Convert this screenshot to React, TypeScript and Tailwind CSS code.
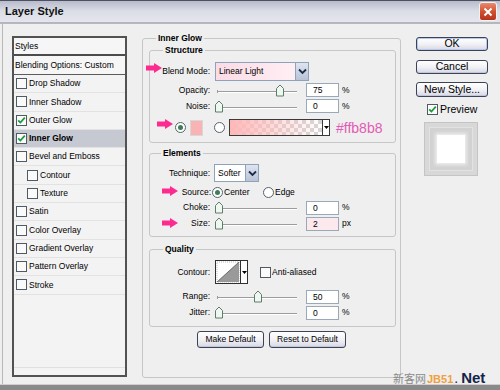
import React from "react";

const Check = ({ checked }: { checked?: boolean }) => (
  <span className="w-[11px] h-[11px] border border-[#4e5a64] bg-[#fafafa] flex items-center justify-center shrink-0">
    {checked && (
      <svg width="9" height="9" viewBox="0 0 9 9">
        <path d="M1.2 4.3 L3.4 6.6 L7.8 1.6" stroke="#1c9a3c" strokeWidth="1.7" fill="none" />
      </svg>
    )}
  </span>
);

const Radio = ({ on }: { on?: boolean }) => (
  <span className="w-[11px] h-[11px] rounded-full border border-[#56626c] bg-white flex items-center justify-center shrink-0">
    {on && <span className="w-[5px] h-[5px] rounded-full bg-[#3d7f54]" />}
  </span>
);

const Slider = ({ pos }: { pos: number }) => (
  <svg width="84" height="13" viewBox="0 0 84 13" className="shrink-0">
    <line x1="2" y1="7.5" x2="82" y2="7.5" stroke="#9c9c9c" />
    <line x1="2" y1="8.5" x2="82" y2="8.5" stroke="#ffffff" />
    <line x1="2.5" y1="6" x2="2.5" y2="9" stroke="#9c9c9c" />
    <path
      d={`M${pos - 3.5} 4.5 L${pos} 1 L${pos + 3.5} 4.5 V12 H${pos - 3.5} Z`}
      fill="#f0f6f0"
      stroke="#5b7d6b"
    />
  </svg>
);

const Input = ({ value, pink }: { value: string; pink?: boolean }) => (
  <div
    className={
      pink
        ? "w-[33px] h-[14px] border border-[#9aa9b8] bg-[#fbe9ee] pl-[6px] leading-[12px] shrink-0"
        : "w-[33px] h-[14px] border border-[#9aa9b8] bg-white pl-[6px] leading-[12px] shrink-0"
    }
  >
    {value}
  </div>
);

const Chevron = () => (
  <svg width="9" height="7" viewBox="0 0 9 7">
    <path d="M1 1.5 L4.5 5 L8 1.5" stroke="#1d2c4c" strokeWidth="1.8" fill="none" />
  </svg>
);

const Arrow = ({ className }: { className: string }) => (
  <svg width="16" height="10" viewBox="0 0 16 10" className={className}>
    <path d="M0 2.5 H8 V0 L16 5 L8 10 V7.5 H0 Z" fill="#ff2a90" />
  </svg>
);

const Legend = ({ text, ml }: { text: string; ml: string }) => (
  <div className={`-mt-[7px] ${ml} px-[2px] w-fit h-[12px] leading-[12px] font-bold bg-[#efefef]`}>{text}</div>
);

const XPButton = ({ children, className }: { children: React.ReactNode; className: string }) => (
  <div
    className={`flex items-center justify-center border border-[#3b4457] rounded-[3px] bg-gradient-to-b from-[#ffffff] via-[#f2f2f6] to-[#d6d8e4] shadow-[inset_0_-1px_0_#c2c6d6] ${className}`}
  >
    {children}
  </div>
);

const items: { label: string; checked?: boolean; indent?: boolean; selected?: boolean }[] = [
  { label: "Drop Shadow" },
  { label: "Inner Shadow" },
  { label: "Outer Glow", checked: true },
  { label: "Inner Glow", checked: true, selected: true },
  { label: "Bevel and Emboss" },
  { label: "Contour", indent: true },
  { label: "Texture", indent: true },
  { label: "Satin" },
  { label: "Color Overlay" },
  { label: "Gradient Overlay" },
  { label: "Pattern Overlay" },
  { label: "Stroke" },
];

export default function App() {
  return (
    <div className="w-[500px] h-[390px] relative overflow-hidden bg-[#efefef] text-black text-[8.5px] font-['Liberation_Sans',Arial,sans-serif] flex flex-col">
      {/* Title bar */}
      <div className="h-[24px] shrink-0 flex items-center justify-between border-t border-[#4c5060] border-b-2 border-b-[#b4b6c0] bg-gradient-to-b from-[#b8bccb] via-[#dcdee7] to-[#e4e5ec]">
        <div className="ml-[5px] text-[11px] font-bold text-[#111] leading-none">Layer Style</div>
        <div className="mr-[3px] w-[18px] h-[19px] rounded-[3px] border border-[#f4f4f4] bg-gradient-to-b from-[#e88a70] via-[#d2502e] to-[#b8321a] flex items-center justify-center">
          <svg width="10" height="10" viewBox="0 0 10 10">
            <path d="M1.5 1.5 L8.5 8.5 M8.5 1.5 L1.5 8.5" stroke="#ffffff" strokeWidth="2" />
          </svg>
        </div>
      </div>

      {/* Body */}
      <div className="h-[360px] shrink-0 flex border-l border-l-[#b8b8b8] ml-[2px] pl-[9px] pt-[12px]">
        {/* Left list */}
        <div className="w-[115px] h-[341px] shrink-0 border-2 border-[#525252] bg-[#f3f3f3] flex flex-col">
          <div className="h-[16px] shrink-0 pl-[1px] flex items-center bg-[#f6f6f6]">Styles</div>
          <div className="h-[2px] shrink-0 bg-[#4c4c4c]" />
          <div className="h-[19px] shrink-0 pl-[1px] flex items-center bg-[#f6f6f6] border-b border-[#5c5c5c]">
            Blending Options: Custom
          </div>
          {items.map((it) => (
            <div
              key={it.label}
              className={
                (it.selected ? "bg-[#c6c8d2] font-bold " : "") +
                (it.indent ? "pl-[13px] " : "pl-[2px] ") +
                "h-[18.3px] shrink-0 flex items-center gap-[2px] border-b border-[#e2e2e2]"
              }
            >
              <Check checked={it.checked} />
              <span>{it.label}</span>
            </div>
          ))}
          <div className="flex-1" />
          <div className="h-[1px] bg-[#e0e0e0] mb-[7px]" />
        </div>

        {/* Middle: Inner Glow group */}
        <div className="ml-[15px] mt-[2px] w-[259px] h-[340px] shrink-0 border border-[#c6c6c6] rounded-[3px] flex flex-col">
          <Legend text="Inner Glow" ml="ml-[13px]" />

          {/* Structure */}
          <div className="mt-[6px] ml-[6px] mr-[4px] h-[93px] shrink-0 border border-[#c6c6c6] rounded-[3px] flex flex-col">
            <Legend text="Structure" ml="ml-[13px]" />
            <div className="mt-[6px] h-[19px] flex items-center">
              <div className="w-[60px] text-right">Blend Mode:</div>
              <div className="ml-[5px] w-[94px] h-[19px] flex border border-[#8ea3ba] bg-gradient-to-r from-[#fbdbe6] to-[#fff2f6]">
                <div className="flex-1 pl-[3px] flex items-center">Linear Light</div>
                <div className="w-[13px] h-full border-l border-[#8ea3ba] bg-gradient-to-b from-[#dfe5f0] to-[#b9c3d6] flex items-center justify-center">
                  <Chevron />
                </div>
              </div>
            </div>
            <div className="mt-[2px] h-[14px] flex items-center">
              <div className="w-[60px] text-right">Opacity:</div>
              <div className="ml-[5px]">
                <Slider pos={65} />
              </div>
              <div className="ml-[7px]">
                <Input value="75" />
              </div>
              <span className="ml-[3px]">%</span>
            </div>
            <div className="mt-[2px] h-[14px] flex items-center">
              <div className="w-[60px] text-right">Noise:</div>
              <div className="ml-[5px]">
                <Slider pos={4} />
              </div>
              <div className="ml-[7px]">
                <Input value="0" />
              </div>
              <span className="ml-[3px]">%</span>
            </div>
            <div className="mt-[6px] h-[17px] flex items-center">
              <div className="ml-[25px]">
                <Radio on />
              </div>
              <div className="ml-[4px] w-[13px] h-[16px] bg-[#f8b4b4] border border-[#d8d8d8]" />
              <div className="ml-[11px]">
                <Radio />
              </div>
              <div className="ml-[4px] h-[17px] flex border border-[#3a3a3a]">
                <svg width="92" height="15" viewBox="0 0 92 15">
                  <defs>
                    <pattern id="chk" width="8" height="8" patternUnits="userSpaceOnUse">
                      <rect width="8" height="8" fill="#ffffff" />
                      <rect width="4" height="4" fill="#d6d6d6" />
                      <rect x="4" y="4" width="4" height="4" fill="#d6d6d6" />
                    </pattern>
                    <linearGradient id="gr" x1="0" x2="1" y1="0" y2="0">
                      <stop offset="0" stopColor="#ffb8b8" stopOpacity="1" />
                      <stop offset="1" stopColor="#ffb8b8" stopOpacity="0" />
                    </linearGradient>
                  </defs>
                  <rect width="92" height="15" fill="url(#chk)" />
                  <rect width="92" height="15" fill="url(#gr)" />
                </svg>
                <div className="w-[7px] h-full border-l border-[#3a3a3a] bg-white flex items-center justify-center">
                  <svg width="5" height="3" viewBox="0 0 5 3">
                    <path d="M0 0 H5 L2.5 3 Z" fill="#000" />
                  </svg>
                </div>
              </div>
              <div className="ml-[6px] text-[14px] leading-none text-[#e35bb5]">#ffb8b8</div>
            </div>
          </div>

          {/* Elements */}
          <div className="mt-[10px] ml-[6px] mr-[4px] h-[84px] shrink-0 border border-[#c6c6c6] rounded-[3px] flex flex-col">
            <Legend text="Elements" ml="ml-[11px]" />
            <div className="mt-[5px] h-[18px] flex items-center">
              <div className="w-[60px] text-right">Technique:</div>
              <div className="ml-[4px] w-[45px] h-[18px] flex border border-[#8ea3ba] bg-white">
                <div className="flex-1 pl-[3px] flex items-center">Softer</div>
                <div className="w-[13px] h-full border-l border-[#8ea3ba] bg-gradient-to-b from-[#dfe5f0] to-[#b9c3d6] flex items-center justify-center">
                  <Chevron />
                </div>
              </div>
            </div>
            <div className="mt-[3px] h-[14px] flex items-center">
              <div className="w-[61px] text-right">Source:</div>
              <div className="ml-[1px]">
                <Radio on />
              </div>
              <span className="ml-[1px] w-[39px]">Center</span>
              <Radio />
              <span className="ml-[1px]">Edge</span>
            </div>
            <div className="mt-[2px] h-[13px] flex items-center">
              <div className="w-[60px] text-right">Choke:</div>
              <div className="ml-[5px]">
                <Slider pos={4} />
              </div>
              <div className="ml-[7px]">
                <Input value="0" />
              </div>
              <span className="ml-[3px]">%</span>
            </div>
            <div className="mt-[3px] h-[13px] flex items-center">
              <div className="w-[60px] text-right">Size:</div>
              <div className="ml-[5px]">
                <Slider pos={4} />
              </div>
              <div className="ml-[7px]">
                <Input value="2" pink />
              </div>
              <span className="ml-[3px]">px</span>
            </div>
          </div>

          {/* Quality */}
          <div className="mt-[12px] ml-[6px] mr-[4px] h-[78px] shrink-0 border border-[#c6c6c6] rounded-[3px] flex flex-col">
            <Legend text="Quality" ml="ml-[13px]" />
            <div className="mt-[5px] h-[24px] flex items-center">
              <div className="w-[60px] text-right">Contour:</div>
              <div className="ml-[5px] w-[33px] h-[24px] flex border border-[#303030] bg-white">
                <svg width="24" height="22" viewBox="0 0 24 22">
                  <rect x="1" y="1" width="22" height="20" fill="none" stroke="#bbbbbb" strokeDasharray="1 1" />
                  <path d="M1 21 L23 1 V21 Z" fill="#9a9a9a" />
                  <path d="M1 21 L23 1" stroke="#555" strokeWidth="0.8" />
                </svg>
                <div className="w-[7px] h-full border-l border-[#303030] flex items-center justify-center">
                  <svg width="5" height="3" viewBox="0 0 5 3">
                    <path d="M0 0 H5 L2.5 3 Z" fill="#000" />
                  </svg>
                </div>
              </div>
              <div className="ml-[12px]">
                <Check />
              </div>
              <span className="ml-[1px]">Anti-aliased</span>
            </div>
            <div className="mt-[6px] h-[13px] flex items-center">
              <div className="w-[60px] text-right">Range:</div>
              <div className="ml-[5px]">
                <Slider pos={43} />
              </div>
              <div className="ml-[7px]">
                <Input value="50" />
              </div>
              <span className="ml-[3px]">%</span>
            </div>
            <div className="mt-[3px] h-[13px] flex items-center">
              <div className="w-[60px] text-right">Jitter:</div>
              <div className="ml-[5px]">
                <Slider pos={4} />
              </div>
              <div className="ml-[7px]">
                <Input value="0" />
              </div>
              <span className="ml-[3px]">%</span>
            </div>
          </div>

          <div className="mt-[4px] pl-[54px] flex gap-[5px]">
            <XPButton className="w-[67px] h-[17px]">Make Default</XPButton>
            <XPButton className="w-[77px] h-[17px]">Reset to Default</XPButton>
          </div>
        </div>

        {/* Right column */}
        <div className="ml-[15px] w-[72px] shrink-0 flex flex-col text-[10.5px]">
          <XPButton className="mt-[1px] h-[14px] border-[#2e3a66] shadow-[inset_0_0_0_1px_#b8c8ec]">OK</XPButton>
          <XPButton className="mt-[9px] h-[14px]">Cancel</XPButton>
          <XPButton className="mt-[8px] h-[15px]">New Style...</XPButton>
          <div className="mt-[7px] ml-[11px] h-[11px] flex items-center gap-[2px]">
            <Check checked />
            <span>Preview</span>
          </div>
          <div className="mt-[7px] ml-[8px] w-[54px] h-[54px] border border-[#c4c4c4] bg-[#d8d8d8] p-[4px]">
            <div className="w-full h-full border border-[#e2e2e2] bg-[#d2d2d2] flex items-center justify-center">
              <div className="w-[28px] h-[28px] bg-white shadow-[0_0_3px_2px_#ececec]" />
            </div>
          </div>
        </div>
      </div>

      {/* Bottom frame */}
      <div className="h-[6px] shrink-0 border-t border-[#cfcfcf] bg-[#8a8a8a]" />

      {/* Annotation arrows */}
      <Arrow className="absolute left-[146px] top-[63px]" />
      <Arrow className="absolute left-[157px] top-[119px]" />
      <Arrow className="absolute left-[162px] top-[186px]" />
      <Arrow className="absolute left-[162px] top-[218px]" />

      {/* Watermark */}
      <div className="absolute left-[393px] top-[370px] w-max whitespace-nowrap flex items-end leading-none">
        <span className="text-[11px] leading-[13px] text-[#8a8a8a] font-['Noto_Sans_CJK_SC',sans-serif]">新客网</span>
        <span className="ml-[1px] text-[11px] leading-[12px] text-[#f0a040] font-bold">JB51</span>
        <span className="ml-[1px] text-[14px] leading-[14px] text-[#14244a]">.</span>
        <span className="ml-[3px] text-[15px] leading-[15px] text-[#14244a] font-bold">Net</span>
      </div>
    </div>
  );
}
